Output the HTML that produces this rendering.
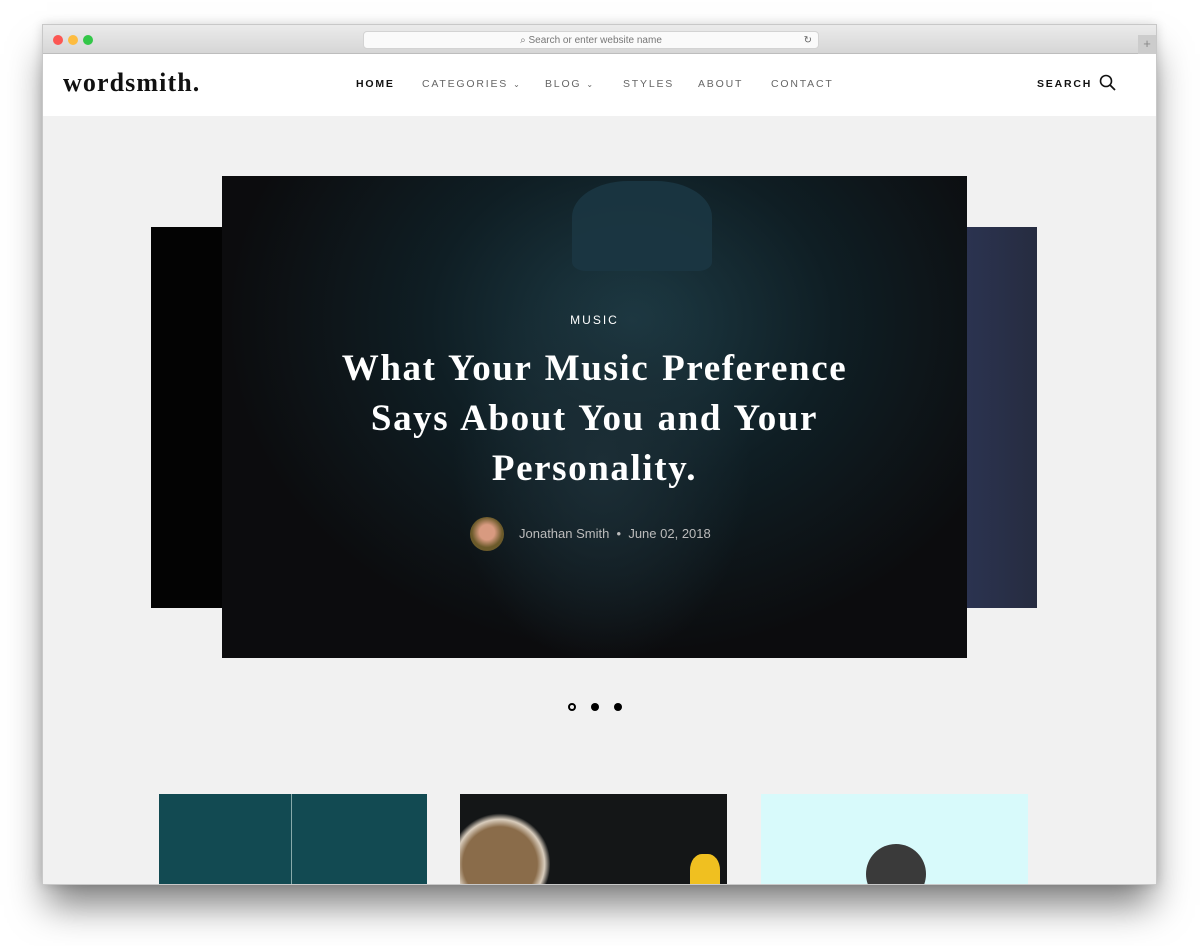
<!DOCTYPE html>
<html><head><meta charset="utf-8"><style>
*{margin:0;padding:0;box-sizing:border-box}
body{width:1200px;height:946px;background:#fff;position:relative;overflow:hidden;font-family:"Liberation Sans",sans-serif}
.shadow{position:absolute;left:42px;top:24px;width:1115px;height:861px;box-shadow:0 25px 35px -5px rgba(0,0,0,.5),0 0 10px rgba(0,0,0,.15);}
.win{position:absolute;left:42px;top:24px;width:1115px;height:861px;background:#f1f1f1;overflow:hidden;border:1px solid #c8c8c8}
.bar{position:absolute;left:0;top:0;width:100%;height:29px;background:linear-gradient(#ebebeb,#d6d6d6);border-bottom:1px solid #bdbdbd}
.dot{position:absolute;top:10px;width:10px;height:10px;border-radius:50%}
.url{position:absolute;left:320px;top:6px;width:456px;height:18px;background:#fafafa;border-radius:4px;border:1px solid #d3d3d3;font-size:10px;color:#777;text-align:center;line-height:17px}
.hdr{position:absolute;left:0;top:29px;width:100%;height:62px;background:#fff}
.logo{position:absolute;left:20px;top:14px;font-family:"Liberation Serif",serif;font-weight:bold;font-size:26px;color:#111;letter-spacing:1.1px}
.nav{position:absolute;top:24px;font-size:10.5px;letter-spacing:1.8px;color:#666}
.ch{font-size:8px;margin-left:5px}
</style></head><body>
<div class="shadow"></div>
<div class="win">
<div class="bar">
<div class="dot" style="left:10px;background:#fc5753"></div>
<div class="dot" style="left:25px;background:#fdbc40"></div>
<div class="dot" style="left:40px;background:#33c748"></div>
<div class="url">⌕ Search or enter website name<span style="position:absolute;right:6px;color:#666">↻</span></div>
<div style="position:absolute;right:0;top:10px;width:18px;height:19px;background:#ccc;color:#888;font-size:13px;text-align:center;line-height:18px">+</div>
</div>
<div class="hdr">
<div class="logo">wordsmith.</div>
<div class="nav" style="left:313px;color:#111;font-weight:bold">HOME</div>
<div class="nav" style="left:379px">CATEGORIES<span class="ch">⌄</span></div>
<div class="nav" style="left:502px">BLOG<span class="ch">⌄</span></div>
<div class="nav" style="left:580px">STYLES</div>
<div class="nav" style="left:655px">ABOUT</div>
<div class="nav" style="left:728px">CONTACT</div>
<div class="nav" style="left:994px;color:#111;font-weight:bold">SEARCH</div>
<svg style="position:absolute;left:1056px;top:20px" width="18" height="18" viewBox="0 0 18 18"><circle cx="7" cy="7" r="5.5" fill="none" stroke="#111" stroke-width="1.6"/><path d="M11 11l5 5" stroke="#111" stroke-width="1.8"/></svg>
</div>
<div style="position:absolute;left:108px;top:202px;width:71px;height:381px;background:#030303"></div>
<div style="position:absolute;left:924px;top:202px;width:70px;height:381px;background:linear-gradient(90deg,#2b3350,#262c40)"></div>
<div style="position:absolute;left:179px;top:151px;width:745px;height:482px;background:radial-gradient(ellipse at 55% 30%,#1d3a44 0%,#0f1e24 35%,#0c0c0e 70%),#0c0c0c;overflow:hidden">
<div style="position:absolute;left:350px;top:5px;width:140px;height:90px;background:#1b3642;border-radius:40% 40% 10% 10%;opacity:.9"></div>
<div style="position:absolute;left:230px;top:90px;width:300px;height:400px;background:radial-gradient(ellipse,#1c2e36 0%,rgba(0,0,0,0) 70%)"></div>
<div style="position:absolute;left:0;top:137px;width:100%;text-align:center;color:#fff;font-size:12px;letter-spacing:2px">MUSIC</div>
<div style="position:absolute;left:0;top:168px;width:100%;text-align:center;color:#fff;font-family:'Liberation Serif',serif;font-weight:bold;font-size:37px;line-height:50px;letter-spacing:1.6px;word-spacing:2px">What Your Music Preference<br>Says About You and Your<br>Personality.</div>
<div style="position:absolute;left:248px;top:341px;width:34px;height:34px;border-radius:50%;background:radial-gradient(circle at 50% 45%,#d89a80 30%,#6b5a2a 60%)"></div>
<div style="position:absolute;left:297px;top:350px;color:#bbb;font-size:13px">Jonathan Smith &nbsp;•&nbsp; June 02, 2018</div>
</div>
<div style="position:absolute;left:525px;top:678px;width:8px;height:8px;border-radius:50%;border:2px solid #000"></div>
<div style="position:absolute;left:548px;top:678px;width:8px;height:8px;border-radius:50%;background:#000"></div>
<div style="position:absolute;left:571px;top:678px;width:8px;height:8px;border-radius:50%;background:#000"></div>
<div style="position:absolute;left:116px;top:769px;width:268px;height:100px;background:#124a52"><div style="position:absolute;left:132px;top:0;width:1px;height:100%;background:#8aa"></div></div>
<div style="position:absolute;left:417px;top:769px;width:267px;height:100px;background:#141617;overflow:hidden"><div style="position:absolute;left:-10px;top:15px;width:100px;height:110px;border-radius:50%;background:radial-gradient(circle,#8a6c4a 50%,#d9cdbd 60%,#141617 68%)"></div><div style="position:absolute;left:230px;top:60px;width:30px;height:40px;background:#f0c020;border-radius:40% 40% 0 0"></div></div>
<div style="position:absolute;left:718px;top:769px;width:267px;height:100px;background:#d8fafb"><div style="position:absolute;left:105px;top:50px;width:60px;height:60px;border-radius:50%;background:#3a3a3a"></div></div>
</div>
</body></html>
